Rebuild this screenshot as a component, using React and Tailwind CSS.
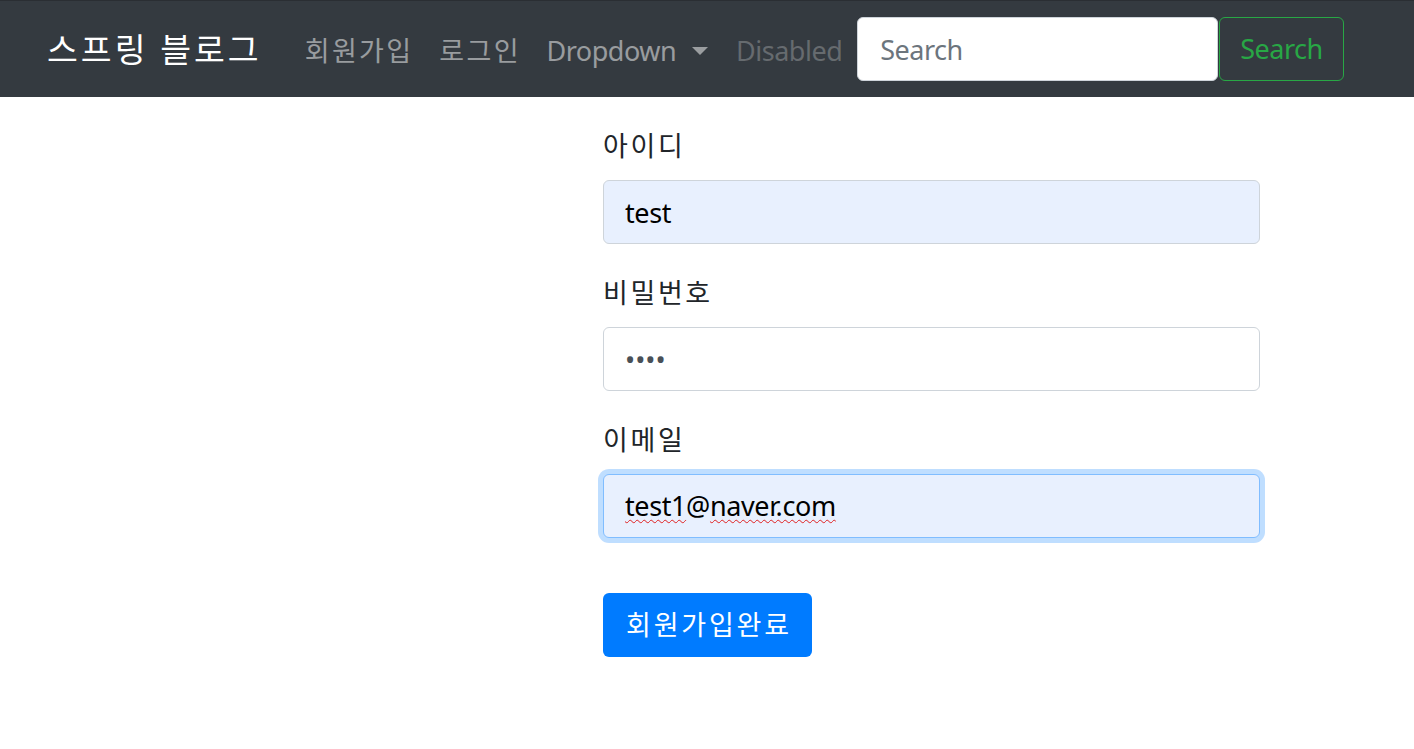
import React from "react";

const font = {
  fontFamily: '"Segoe UI", "Noto Sans", "Noto Sans CJK KR", sans-serif',
};

const NavLink = ({ children, className = "" }) => (
  <a href="#" className={`pl-[14px] text-[27px] leading-[40px] ${className}`}>
    {children}
  </a>
);

const Field = ({ label, children }) => (
  <div className="mb-[29px]">
    <label className="block text-[27px] leading-[40px] tracking-[2.6px] text-[#212529] mb-[14px]">
      {label}
    </label>
    {children}
  </div>
);

const App = () => {
  return (
    <div className="min-h-screen bg-white" style={font}>
      {/* Navbar */}
      <nav className="flex items-center h-[97px] bg-[#343a40] border-t border-[#2a2e33] pl-[47px]">
        <a href="#" className="text-[33.5px] leading-[48px] tracking-[3px] text-white mr-[29px]">
          스프링 블로그
        </a>
        <ul className="flex items-center pt-[3px]">
          <li>
            <NavLink className="pr-[11.6px] text-white/50 tracking-[2.4px]">회원가입</NavLink>
          </li>
          <li>
            <NavLink className="pr-[11.6px] text-white/50 tracking-[2.4px]">로그인</NavLink>
          </li>
          <li>
            <NavLink className="pr-[14px] text-white/50 tracking-[-0.5px] inline-flex items-center">
              Dropdown
              <span className="ml-[16px] inline-block w-0 h-0 border-l-[8px] border-r-[8px] border-t-[8px] border-l-transparent border-r-transparent border-t-[#9a9da0]" />
            </NavLink>
          </li>
          <li>
            <NavLink className="pr-[14px] text-white/25 tracking-[-0.5px]">Disabled</NavLink>
          </li>
        </ul>
        <form className="flex items-center ml-[1px]">
          <input
            type="text"
            placeholder="Search"
            className="w-[361px] h-[64px] bg-white rounded-[6px] border border-[#ced4da] px-[22px] text-[27px] tracking-[-0.5px] text-[#495057] placeholder:text-[#6c757d] outline-none"
          />
          <button
            type="button"
            className="h-[64px] px-[20px] rounded-[6px] border border-[#28a745] text-[#28a745] text-[27px] tracking-[-0.5px] ml-[1px]"
          >
            Search
          </button>
        </form>
      </nav>

      {/* Join form */}
      <div className="ml-[603px] w-[657px] pt-[29px]">
        <Field label="아이디">
          <input
            type="text"
            defaultValue="test"
            className="w-full h-[64px] rounded-[6px] border border-[#ced4da] bg-[#e8f0fe] px-[21px] text-[27px] tracking-[-0.4px] text-black outline-none"
          />
        </Field>
        <Field label="비밀번호">
          <input
            type="password"
            defaultValue="test"
            className="w-full h-[64px] rounded-[6px] border border-[#ced4da] bg-white px-[21px] text-[27px] text-[#495057] outline-none"
          />
        </Field>
        <Field label="이메일">
          <div className="w-full h-[64px] flex items-center rounded-[6px] border border-[#80bdff] bg-[#e8f0fe] px-[21px] text-[27px] tracking-[-0.4px] text-black shadow-[0_0_0_5px_rgba(0,123,255,0.25)]">
            <span className="underline decoration-wavy decoration-[#e02020] decoration-1 underline-offset-[3px]">
              test1
            </span>
            @
            <span className="underline decoration-wavy decoration-[#e02020] decoration-1 underline-offset-[3px]">
              naver.com
            </span>
          </div>
        </Field>
        <button
          type="button"
          className="mt-[26px] h-[64px] pl-[23px] pr-[20px] rounded-[6px] bg-[#007bff] text-white text-[27px] tracking-[2.8px]"
        >
          회원가입완료
        </button>
      </div>
    </div>
  );
};

export default App;
